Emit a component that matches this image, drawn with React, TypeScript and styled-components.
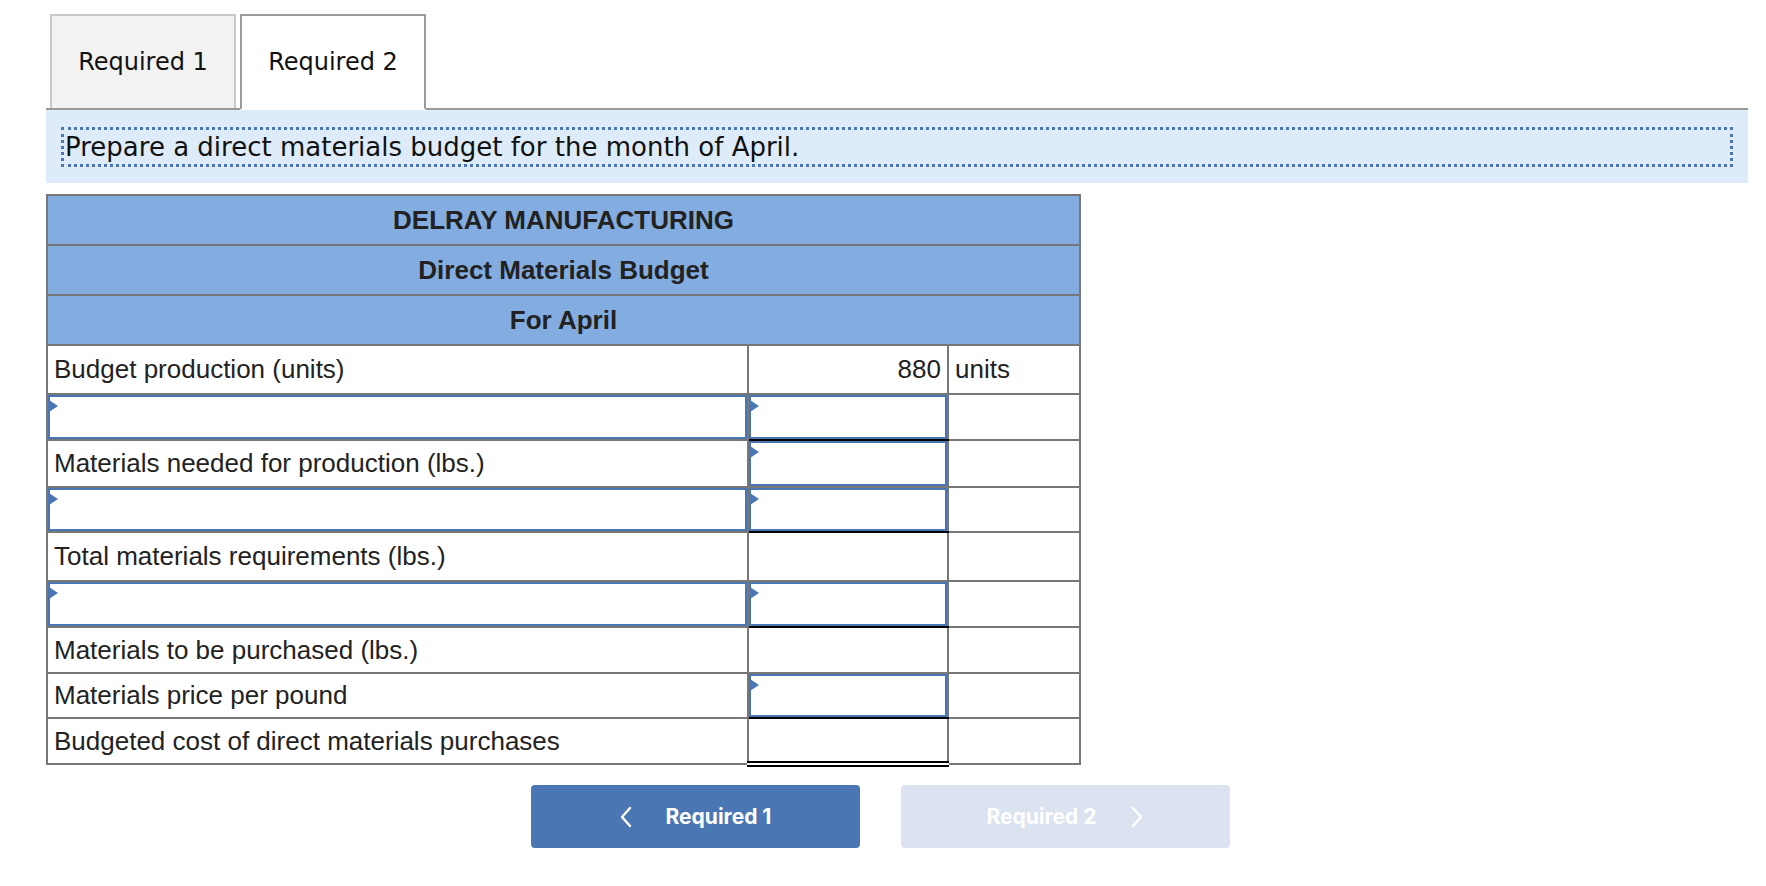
import React from "react";
import styled, { createGlobalStyle } from "styled-components";

const GlobalStyle = createGlobalStyle`
  body {
    margin: 0;
    background: #ffffff;
  }
`;

type Rule = "none" | "single" | "double";

type Row = {
  label?: string;
  labelEntry?: boolean;
  value?: string;
  valueEntry?: boolean;
  unit?: string;
  rule?: Rule;
  height: number;
};

const rows: Row[] = [
  { label: "Budget production (units)", value: "880", unit: "units", height: 49 },
  { labelEntry: true, valueEntry: true, rule: "single", height: 46 },
  { label: "Materials needed for production (lbs.)", valueEntry: true, height: 47 },
  { labelEntry: true, valueEntry: true, rule: "single", height: 45 },
  { label: "Total materials requirements (lbs.)", height: 49 },
  { labelEntry: true, valueEntry: true, rule: "single", height: 46 },
  { label: "Materials to be purchased (lbs.)", height: 46 },
  { label: "Materials price per pound", valueEntry: true, rule: "single", height: 45 },
  { label: "Budgeted cost of direct materials purchases", rule: "double", height: 46 },
];

const Chevron = ({ dir }: { dir: "left" | "right" }) => (
  <svg width="14" height="22" viewBox="0 0 14 22" fill="none">
    <polyline
      points={dir === "left" ? "11,2 3,11 11,20" : "3,2 11,11 3,20"}
      stroke="#ffffff"
      strokeWidth="2.4"
      strokeLinecap="round"
      strokeLinejoin="round"
    />
  </svg>
);

export default function App() {
  return (
    <Page>
      <GlobalStyle />
      <TabBar>
        <Tab>Required 1</Tab>
        <Tab $active>Required 2</Tab>
      </TabBar>

      <Instruction>
        <InstructionText>Prepare a direct materials budget for the month of April.</InstructionText>
      </Instruction>

      <Budget>
        <tbody>
          <tr>
            <HeadCell colSpan={3}>DELRAY MANUFACTURING</HeadCell>
          </tr>
          <tr>
            <HeadCell colSpan={3}>Direct Materials Budget</HeadCell>
          </tr>
          <tr>
            <HeadCell colSpan={3}>For April</HeadCell>
          </tr>
          {rows.map((r, i) => (
            <BodyRow key={i} $h={r.height}>
              <LabelCell $entry={r.labelEntry}>{r.label}</LabelCell>
              <ValueCell $entry={r.valueEntry} $rule={r.rule ?? "none"}>
                {r.value}
              </ValueCell>
              <UnitCell>{r.unit}</UnitCell>
            </BodyRow>
          ))}
        </tbody>
      </Budget>

      <NavRow>
        <NavButton>
          <Chevron dir="left" />
          <span>Required 1</span>
        </NavButton>
        <NavButton $disabled>
          <span>Required 2</span>
          <Chevron dir="right" />
        </NavButton>
      </NavRow>
    </Page>
  );
}

const Page = styled.div`
  padding: 14px 18px 0 46px;
`;

const TabBar = styled.div`
  display: flex;
  align-items: flex-end;
  gap: 4px;
  padding-left: 4px;
  border-bottom: 2px solid #9a9a9a;
`;

const Tab = styled.button<{ $active?: boolean }>`
  box-sizing: border-box;
  width: 186px;
  height: ${(p) => (p.$active ? "96px" : "94px")};
  margin-bottom: ${(p) => (p.$active ? "-2px" : "0")};
  padding: 0;
  font-family: "DejaVu Sans", Verdana, sans-serif;
  font-size: 24px;
  color: #111111;
  background: ${(p) => (p.$active ? "#ffffff" : "#f2f2f2")};
  border: 2px solid ${(p) => (p.$active ? "#9a9a9a" : "#c8c8c8")};
  border-bottom: ${(p) => (p.$active ? "2px solid #ffffff" : "none")};
  cursor: pointer;
`;

const Instruction = styled.div`
  background: #deebf8;
  padding: 17px 15px 16px 15px;
`;

const InstructionText = styled.p`
  margin: 0;
  border: 3px dotted #4a76b4;
  padding: 0 1px;
  font-family: "DejaVu Sans", Verdana, sans-serif;
  font-size: 26px;
  line-height: 34px;
  color: #111111;
`;

const Budget = styled.table`
  margin-top: 11px;
  width: 1035px;
  border-collapse: collapse;
  border: 2px solid #777777;
  font-family: "Liberation Sans", Arial, sans-serif;
  font-size: 26px;
  color: #222222;
`;

const HeadCell = styled.td`
  height: 48px;
  padding: 0;
  background: #83ade0;
  border: 2px solid #777777;
  text-align: center;
  font-weight: 700;
`;

const BodyRow = styled.tr<{ $h: number }>`
  height: ${(p) => p.$h}px;
`;

const Cell = styled.td<{ $entry?: boolean }>`
  position: relative;
  padding: 0 6px;
  border: 2px solid #777777;
  box-shadow: ${(p) => (p.$entry ? "inset 0 0 0 2px #4a76b4" : "none")};

  &::before {
    content: "";
    display: ${(p) => (p.$entry ? "block" : "none")};
    position: absolute;
    left: 1px;
    top: 5px;
    border-left: 9px solid #4a76b4;
    border-top: 6px solid transparent;
    border-bottom: 6px solid transparent;
  }
`;

const LabelCell = styled(Cell)`
  width: 687px;
  text-align: left;
`;

const ValueCell = styled(Cell)<{ $rule: Rule }>`
  width: 186px;
  text-align: right;
  border-bottom: ${(p) =>
    p.$rule === "double"
      ? "6px double #000000"
      : p.$rule === "single"
      ? "2px solid #000000"
      : "2px solid #777777"};
`;

const UnitCell = styled(Cell)`
  text-align: left;
`;

const NavRow = styled.div`
  display: flex;
  justify-content: center;
  gap: 41px;
  margin-top: 18px;
  padding-right: 34px;
`;

const NavButton = styled.button<{ $disabled?: boolean }>`
  width: 329px;
  height: 63px;
  display: flex;
  align-items: center;
  justify-content: center;
  gap: 33px;
  border: none;
  border-radius: 4px;
  background: ${(p) => (p.$disabled ? "#dae3ef" : "#4a77b4")};
  color: #ffffff;
  font-family: Inter, "Liberation Sans", sans-serif;
  font-weight: 700;
  font-size: 21px;
  cursor: ${(p) => (p.$disabled ? "default" : "pointer")};
`;
